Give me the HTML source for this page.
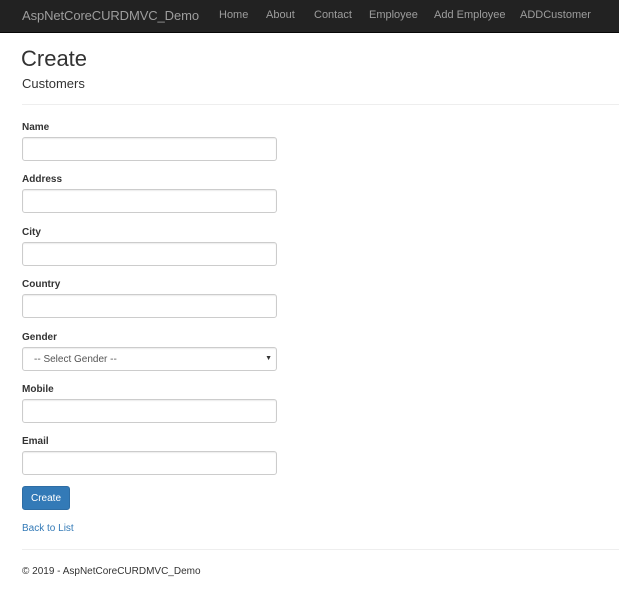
<!DOCTYPE html>
<html><head><style>
*{margin:0;padding:0;box-sizing:border-box}
body{width:619px;height:604px;background:#fff;font-family:"Liberation Sans",Arial,sans-serif;color:#333;position:relative;overflow:hidden}
.nav{position:absolute;left:0;top:0;width:619px;height:33px;background:#222;border-bottom:1px solid #080808}
.nav span{position:absolute;top:9px;font-size:11px;color:#9d9d9d;white-space:nowrap}
.nav .brand{font-size:13px;top:8px;left:22px;letter-spacing:-0.1px}
.a{position:absolute;white-space:nowrap}
.lbl{position:absolute;left:22px;font-size:10px;font-weight:bold;color:#333}
.inp{position:absolute;left:22px;width:255px;height:24px;border:1px solid #ccc;border-radius:3px;background:#fff;box-shadow:inset 0 1px 1px rgba(0,0,0,.075)}
hr{position:absolute;left:22px;width:597px;border:0;border-top:1px solid #eee}
</style></head><body>
<div class="nav">
<span class="brand">AspNetCoreCURDMVC_Demo</span>
<span style="left:219px">Home</span>
<span style="left:266px">About</span>
<span style="left:314px">Contact</span>
<span style="left:369px">Employee</span>
<span style="left:434px">Add Employee</span>
<span style="left:520px">ADDCustomer</span>
</div>
<div class="a" style="left:21px;top:46px;font-size:22px;color:#333">Create</div>
<div class="a" style="left:22px;top:76px;font-size:13px;color:#333">Customers</div>
<hr style="top:104px">
<div class="lbl" style="top:122px">Name</div><div class="inp" style="top:137px"></div>
<div class="lbl" style="top:174px">Address</div><div class="inp" style="top:189px"></div>
<div class="lbl" style="top:227px">City</div><div class="inp" style="top:242px"></div>
<div class="lbl" style="top:279px">Country</div><div class="inp" style="top:294px"></div>
<div class="lbl" style="top:332px">Gender</div><div class="inp" style="top:347px"><span style="position:absolute;left:11px;top:6px;font-size:10px;color:#555">-- Select Gender --</span><span style="position:absolute;right:4px;top:7px;font-size:7px;color:#333">▼</span></div>
<div class="lbl" style="top:384px">Mobile</div><div class="inp" style="top:399px"></div>
<div class="lbl" style="top:436px">Email</div><div class="inp" style="top:451px"></div>
<div class="a" style="left:22px;top:486px;width:48px;height:24px;background:#337ab7;border:1px solid #2e6da4;border-radius:3px;color:#fff;font-size:10px;text-align:center;line-height:24px">Create</div>
<div class="a" style="left:22px;top:523px;font-size:10px;color:#337ab7">Back to List</div>
<hr style="top:549px">
<div class="a" style="left:22px;top:566px;font-size:10px;color:#333">© 2019 - AspNetCoreCURDMVC_Demo</div>
</body></html>
